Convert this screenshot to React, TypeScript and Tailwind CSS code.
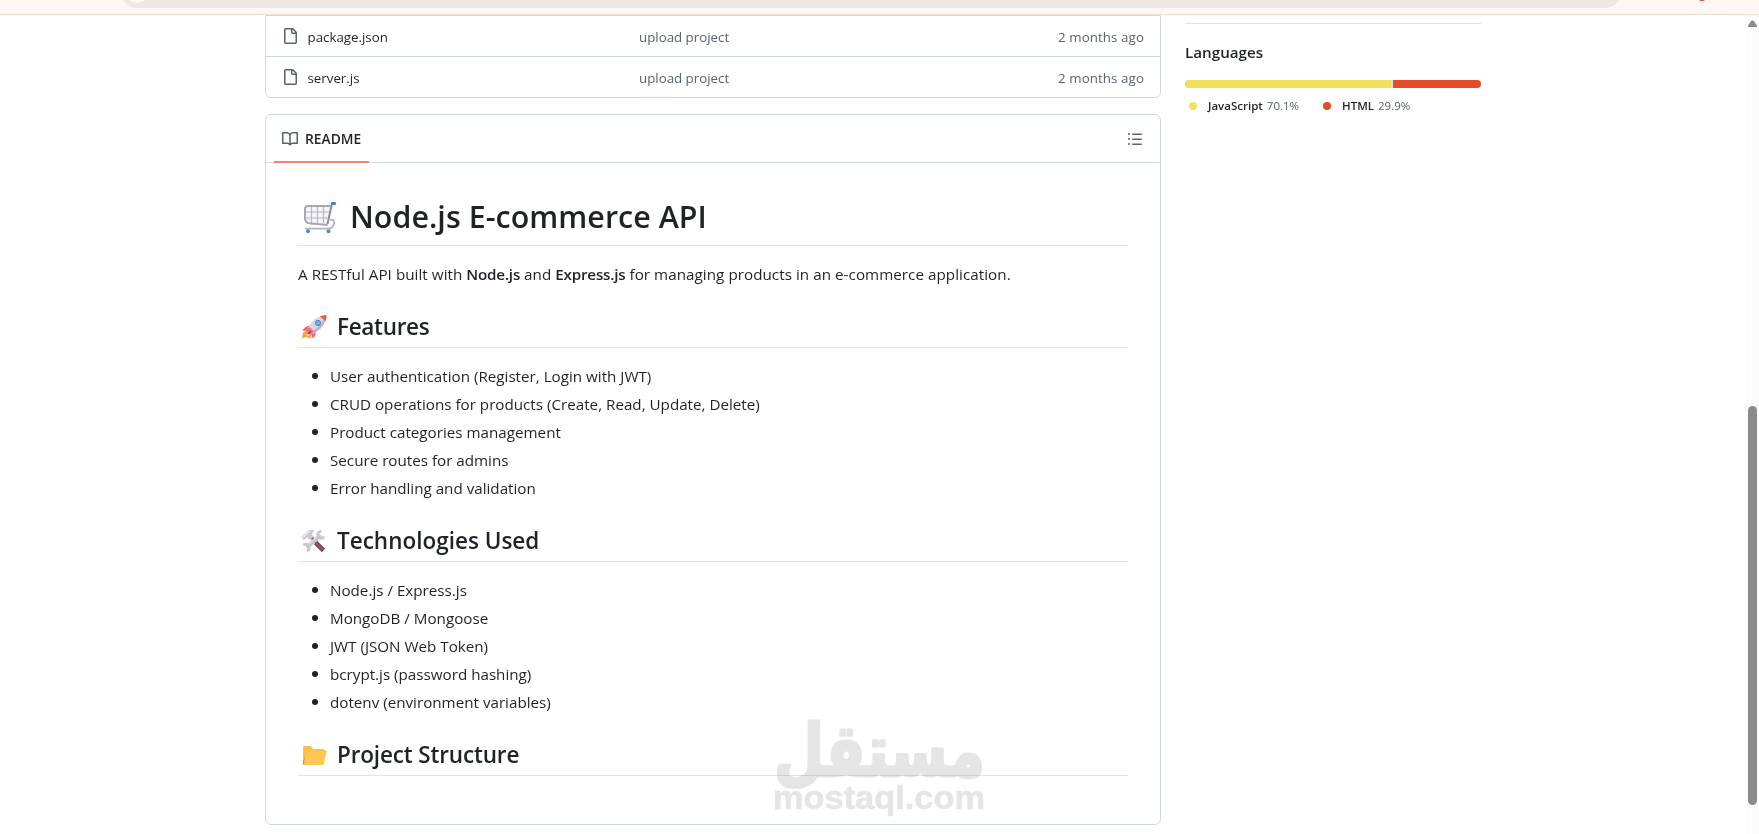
import type { ReactNode } from "react"

const files = ["package.json", "server.js"]

const features = [
  "User authentication (Register, Login with JWT)",
  "CRUD operations for products (Create, Read, Update, Delete)",
  "Product categories management",
  "Secure routes for admins",
  "Error handling and validation",
]

const technologies = [
  "Node.js / Express.js",
  "MongoDB / Mongoose",
  "JWT (JSON Web Token)",
  "bcrypt.js (password hashing)",
  "dotenv (environment variables)",
]

function Octicon({ d }: { d: string }) {
  return (
    <svg width="16" height="16" viewBox="0 0 16 16" className="shrink-0 fill-[#59636e]">
      <path d={d} />
    </svg>
  )
}

const filePath =
  "M2 1.75C2 .784 2.784 0 3.75 0h6.586c.464 0 .909.184 1.237.513l2.914 2.914c.329.328.513.773.513 1.237v9.586A1.75 1.75 0 0 1 13.25 16h-9.5A1.75 1.75 0 0 1 2 14.25Zm1.75-.25a.25.25 0 0 0-.25.25v12.5c0 .138.112.25.25.25h9.5a.25.25 0 0 0 .25-.25V6h-2.75A1.75 1.75 0 0 1 9 4.25V1.5Zm6.75.062V4.25c0 .138.112.25.25.25h2.688l-.011-.013-2.914-2.914-.013-.011Z"
const bookPath =
  "M0 1.75A.75.75 0 0 1 .75 1h4.253c1.227 0 2.317.59 3 1.501A3.743 3.743 0 0 1 11.006 1h4.245a.75.75 0 0 1 .75.75v10.5a.75.75 0 0 1-.75.75h-4.507a2.25 2.25 0 0 0-1.591.659l-.622.621a.75.75 0 0 1-1.06 0l-.622-.621A2.25 2.25 0 0 0 5.258 13H.75a.75.75 0 0 1-.75-.75Zm7.251 10.324.004-5.073-.002-2.253A2.25 2.25 0 0 0 5.003 2.5H1.5v9h3.757a3.75 3.75 0 0 1 1.994.574ZM8.755 4.75l-.004 7.322a3.752 3.752 0 0 1 1.992-.572H14.5v-9h-3.495a2.25 2.25 0 0 0-2.25 2.25Z"
const listPath =
  "M5.75 2.5h8.5a.75.75 0 0 1 0 1.5h-8.5a.75.75 0 0 1 0-1.5Zm0 5h8.5a.75.75 0 0 1 0 1.5h-8.5a.75.75 0 0 1 0-1.5Zm0 5h8.5a.75.75 0 0 1 0 1.5h-8.5a.75.75 0 0 1 0-1.5ZM2 14a1 1 0 1 1 0-2 1 1 0 0 1 0 2Zm1-6a1 1 0 1 1-2 0 1 1 0 0 1 2 0ZM2 4a1 1 0 1 1 0-2 1 1 0 0 1 0 2Z"

function Cart() {
  return (
    <svg width="34" height="32" viewBox="0 0 34 32" fill="none" className="mt-0.5 mr-[13px] ml-[5px] shrink-0">
      <path d="M2 4h26l-3.5 18H7.5C4 22 2 20 2 16Z" fill="#f5f4f7" />
      <path d="M2 10h25M2 16h24M8.5 4v17M14.5 4v17M20.5 4v17" stroke="#b9b6c1" strokeWidth="1.2" />
      <path d="M29 4H5C3 4 2 5 2 7v9c0 4 2 5.5 6 5.5l16.5 1.5" stroke="#aaa7b2" strokeWidth="2" />
      <path d="M31 1.5h-2L24.5 22" stroke="#8f8c98" strokeWidth="2" />
      <path d="M27 18c3.5-1 5 1 4 4s-3 4.7-6 4.7H2" stroke="#b4b1bb" strokeWidth="1.8" />
      <rect x="28" y="0" width="5" height="3" rx="1.2" fill="#3f83c4" />
      <circle cx="5" cy="29.3" r="2" fill="#4a90d0" />
      <circle cx="25.5" cy="29.3" r="2" fill="#4a90d0" />
    </svg>
  )
}

function Rocket() {
  return (
    <svg width="26" height="24" viewBox="0 0 26 24" className="mr-2.5 ml-[3px] shrink-0">
      <path d="M2 17.5 7 15l4 4-1.5 4.5L5 22l-4 1.5Z" fill="#f9a24b" />
      <path d="M5.5 19.5 8 18l1 1-1.5 2.5Z" fill="#ffe08a" />
      <path d="M9 10.5c-4 .5-6.5 2.5-7.5 5.5l4.5-.5ZM14.5 16c.5 3-.5 5.5-2.5 7.5l-2-4.5Z" fill="#f4656a" />
      <path d="M6 16.5C8 9 13 3 20.5 1l4.3 3.5C23 11 17.5 16.5 9.5 20Z" fill="#d9d6e2" />
      <path d="M9.5 20C17.5 16.5 23 11 24.8 4.5l-1.5-1.2C20 10.5 14 15.5 7.5 18.3Z" fill="#b9b5c6" />
      <path d="M18.8 1.4C21 .4 23.5 0 25.5.3c.2 2-.2 4-1 5.7Z" fill="#ee5a3c" />
      <path d="M5 15.5l3.5-3.5 4.5 4.5-3.5 3.5Z" fill="#ff6f6f" />
      <path d="M7 19l3-3" stroke="#7d4262" strokeWidth="1.5" />
      <circle cx="17" cy="8" r="2.9" fill="#4c7fbd" />
      <circle cx="17" cy="8" r="2" fill="#6fb7f2" />
    </svg>
  )
}

function Tools() {
  return (
    <svg width="26" height="24" viewBox="0 0 26 24" fill="none" className="mr-2.5 ml-[3px] shrink-0">
      <path d="M10.5 8.5 14 12" stroke="#8d5a66" strokeWidth="3" />
      <path d="M14.5 13.5l8 8" stroke="#7c4450" strokeWidth="4.6" />
      <path d="M13.5 12.5l8 8" stroke="#99606c" strokeWidth="1.4" />
      <path d="M.5 8 8 1h5.5l-2.5 4 1.5 2.5L9 11 6.5 8.5 2.5 11Z" fill="#cbc8d4" />
      <path d="M1.5 8.5 9 2" stroke="#e9e7ee" strokeWidth="1.6" />
      <path d="m5.5 18.5 14-12.5" stroke="#c3c0cd" strokeWidth="4" />
      <path d="m5.5 17.5 13-11.7" stroke="#dedce5" strokeWidth="1.5" />
      <path
        d="M20.5 2.2c-3 0-4.5 2.3-3.5 5s4.5 3 6 .3M2.3 16.2c1.5-1.5 4.3-1.5 5.5.3s.5 4.5-1.8 5.5"
        stroke="#c8c5d1"
        strokeWidth="2.6"
      />
    </svg>
  )
}

function Folder() {
  return (
    <svg width="26" height="24" viewBox="0 0 26 24" className="mt-0.5 mr-2.5 ml-[3px] shrink-0">
      <path d="M2 3.5C2 2.6 2.5 2 3.4 2h5.3c.7 0 1.2.3 1.6.8L12 5h10c.9 0 1.5.6 1.5 1.5V12L21 21H3.5C2.6 21 2 20.4 2 19.5Z" fill="#fdbf4c" />
      <path d="M2.2 20.5 3.5 14" stroke="#c98c35" strokeWidth="1" />
      <path d="M7.5 9.5 10.5 6.5H25c.7 0 1 .5.9 1.1l-3 11.9c-.3 1-.9 1.5-1.9 1.5H4c-1 0-1.4-.6-1.2-1.5L4.8 11c.2-1 .8-1.5 1.7-1.5Z" fill="#ffc853" />
    </svg>
  )
}

function SectionTitle({ icon, children }: { icon: ReactNode; children: ReactNode }) {
  return (
    <h2 className="mt-6 mb-4 flex items-center border-b border-[#d1d9e0b3] pt-0.5 pb-[5.1px] text-[22.5px] leading-[30px] font-semibold">
      {icon}
      {children}
    </h2>
  )
}

function BulletList({ items }: { items: string[] }) {
  return (
    <ul className="flex flex-col gap-1 pl-[14px]">
      {items.map((item) => (
        <li key={item} className="flex items-center gap-3 before:size-1.5 before:rounded-full before:bg-[#1f2328]">
          {item}
        </li>
      ))}
    </ul>
  )
}

function Watermark() {
  return (
    <svg
      width="220"
      height="134"
      viewBox="0 0 220 134"
      className="pointer-events-none absolute top-[700px] left-[770px] overflow-visible fill-[#e5e5e5] stroke-[#e5e5e5] mix-blend-multiply"
    >
      <text
        x="4"
        y="76"
        textLength="211"
        lengthAdjust="spacingAndGlyphs"
        strokeWidth="3"
        strokeLinejoin="round"
        className="font-['DejaVu_Sans',sans-serif] text-[72px] font-bold"
      >
        مستقل
      </text>
      <text
        x="3"
        y="109"
        textLength="212"
        lengthAdjust="spacingAndGlyphs"
        strokeWidth="0.6"
        strokeLinejoin="round"
        className="font-['Liberation_Sans',sans-serif] text-[34px] font-bold"
      >
        mostaql.com
      </text>
    </svg>
  )
}

export default function App() {
  return (
    <div className="relative flex h-[834px] w-full flex-col overflow-hidden bg-white font-['Open_Sans',sans-serif] text-[#1f2328]">
      <div className="flex h-[15px] shrink-0 items-end overflow-hidden border-b border-[#f3dfd0] bg-[#fff7f4] pb-[6px] pl-[120px]">
        <div className="flex h-[34px] w-[1502px] shrink-0 items-center rounded-full bg-[#efe7e3] pl-[5px]">
          <div className="size-6 rounded-full bg-[#fff7f4]" />
        </div>
        <div className="mb-[7px] ml-[76px] h-2 w-2 rounded-full bg-[#e0401c]" />
      </div>

      <div className="flex min-h-0 flex-1">
        <main className="ml-[265px] w-[896px] shrink-0">
          <div className="rounded-b-md border border-[#d1d9e0] text-[13.3px]">
            {files.map((name) => (
              <div key={name} className="flex h-[41px] items-center border-b border-[#d1d9e0] px-4 last:h-10 last:border-b-0">
                <div className="flex w-[357px] items-center gap-[9.5px]">
                  <Octicon d={filePath} />
                  <span className="pt-[3px]">{name}</span>
                </div>
                <span className="flex-1 pt-[3px] text-[#59636e]">upload project</span>
                <span className="pt-[3px] tracking-[0.1px] text-[#59636e]">2 months ago</span>
              </div>
            ))}
          </div>

          <div className="mt-4 rounded-md border border-[#d1d9e0]">
            <div className="flex h-12 items-center justify-between border-b border-[#d1d9e0] pr-[17px] pl-2">
              <div className="-mb-px flex h-12 w-[95px] items-center gap-[7px] border-b-2 border-[#fb7d71] pt-0.5 pl-2 text-[13.8px] font-semibold">
                <Octicon d={bookPath} />
                <span>README</span>
              </div>
              <Octicon d={listPath} />
            </div>

            <article className="p-8 text-[15.2px] leading-6">
              <h1 className="mb-4 flex items-center border-b border-[#d1d9e0b3] pt-[1.5px] pb-2 text-[30.4px] leading-10 font-semibold tracking-[0.05px]">
                <Cart />
                Node.js E-commerce API
              </h1>
              <p className="tracking-[0.05px]">
                A RESTful API built with <strong className="font-semibold tracking-[-0.2px]">Node.js</strong> and{" "}
                <strong className="font-semibold tracking-[-0.2px]">Express.js</strong> for managing products in an
                e-commerce application.
              </p>

              <SectionTitle icon={<Rocket />}>
                <span className="tracking-[-0.3px]">Features</span>
              </SectionTitle>
              <BulletList items={features} />

              <SectionTitle icon={<Tools />}>Technologies Used</SectionTitle>
              <BulletList items={technologies} />

              <SectionTitle icon={<Folder />}>
                <span className="tracking-[-0.15px]">Project Structure</span>
              </SectionTitle>
            </article>
          </div>
        </main>

        <aside className="mt-2 ml-6 w-[296px] shrink-0">
          <div className="border-t border-[#d1d9e0b3] pt-4">
            <h2 className="mb-4 text-[15.2px] leading-6 font-semibold">Languages</h2>
            <div className="flex h-2 gap-0.5 overflow-hidden rounded-md bg-[#d9dee3]">
              <div className="w-[206px] bg-[#f1e05a]" />
              <div className="flex-1 bg-[#e34c26]" />
            </div>
            <div className="mt-2 flex text-[11.5px] leading-[18px]">
              <div className="flex w-[134px] items-center pl-1">
                <span className="mr-[11px] size-2 rounded-full bg-[#f1e05a]" />
                <span className="mr-1 pt-px font-semibold">JavaScript</span>
                <span className="pt-px text-[#59636e]">70.1%</span>
              </div>
              <div className="flex items-center pl-1">
                <span className="mr-[11px] size-2 rounded-full bg-[#e34c26]" />
                <span className="mr-1 pt-px font-semibold">HTML</span>
                <span className="pt-px text-[#59636e]">29.9%</span>
              </div>
            </div>
          </div>
        </aside>

        <div className="ml-auto flex w-[14px] flex-col items-center bg-[#fcfcfc] pt-[5px] pl-px">
          <svg width="9" height="7" viewBox="0 0 9 7" className="fill-[#8b8b8b]">
            <path d="M3.5.5h2L9 5.5V7H0V5.5Z" />
          </svg>
          <div className="mt-[379px] h-[399px] w-[9px] rounded-full bg-[#8b8b8b]" />
        </div>
      </div>

      <Watermark />
    </div>
  )
}
